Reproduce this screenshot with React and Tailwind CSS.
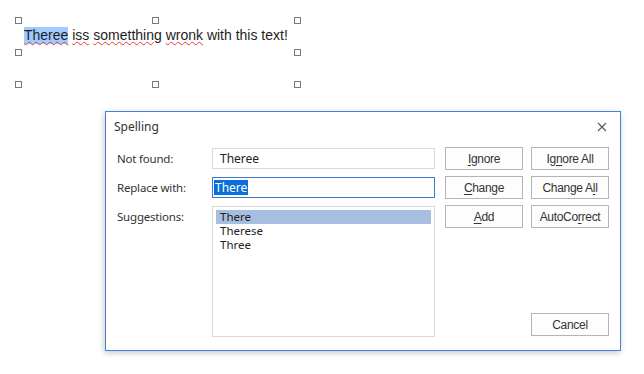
import React from 'react';

const ui = { fontFamily: '"Noto Sans", "Liberation Sans", sans-serif' };
const btnFont = { fontFamily: '"Liberation Sans", Arial, sans-serif' };

/* ── selection handle ── */
function Handle({ className }) {
  return <div className={`absolute w-[7px] h-[7px] border border-[#7a7a7a] bg-white ${className}`} />;
}

function Squiggle({ children }) {
  return (
    <span className="underline decoration-wavy decoration-[#e23b3b] decoration-1 underline-offset-[1px]">
      {children}
    </span>
  );
}

function Btn({ children, className = '' }) {
  return (
    <button
      className={`h-[23px] w-[78px] border border-[#b5b5b5] bg-[#fdfdfd] text-[12px] text-[#333] tracking-[-0.3px] ${className}`}
      style={btnFont}
    >
      {children}
    </button>
  );
}

const U = ({ children }) => <span className="underline underline-offset-2">{children}</span>;

export default function App() {
  return (
    <div className="w-[644px] h-[374px] bg-white overflow-hidden relative">
      {/* Document text box with selection handles */}
      <div className="relative ml-[18px] mt-[20px] w-[279px] h-[64px]">
        <Handle className="-left-[3px] -top-[3px]" />
        <Handle className="left-[134px] -top-[3px]" />
        <Handle className="right-[-4px] -top-[3px]" />
        <Handle className="-left-[3px] top-[29px]" />
        <Handle className="right-[-4px] top-[29px]" />
        <Handle className="-left-[3px] bottom-[-4px]" />
        <Handle className="left-[134px] bottom-[-4px]" />
        <Handle className="right-[-4px] bottom-[-4px]" />
        <p
          className="absolute left-[6px] top-[6px] text-[14px] leading-[18px] text-[#1e1e1e] whitespace-nowrap"
          style={{ fontFamily: '"Liberation Sans", Arial, sans-serif' }}
        >
          <span className="bg-[#9fcbff] pb-[1px]">
            <Squiggle>Theree</Squiggle>
          </span>{' '}
          <Squiggle>iss</Squiggle> <Squiggle>sometthing</Squiggle> <Squiggle>wronk</Squiggle> with this text!
        </p>
      </div>

      {/* Spelling dialog */}
      <div
        className="absolute left-[105px] top-[111px] w-[516px] h-[240px] bg-white border border-[#3f84dc] shadow-[-1px_2px_6px_rgba(0,0,0,0.22)]"
        style={ui}
      >
        <div className="h-[27px] flex items-center justify-between pl-[8px] pr-[13px] mt-[1px]">
          <span className="text-[12px] text-[#333]">Spelling</span>
          <svg width="10" height="10" viewBox="0 0 10 10" className="text-[#555]">
            <path d="M1 1L9 9M9 1L1 9" stroke="currentColor" strokeWidth="1.1" />
          </svg>
        </div>

        <div className="flex pl-[11px] pr-[11px] mt-[7px]">
          {/* left: labels + fields */}
          <div className="flex flex-col gap-[8px] mt-[1px]">
            <div className="flex items-center">
              <span className="w-[95px] text-[11.5px] text-[#333] tracking-[-0.2px]">Not found:</span>
              <div className="w-[223px] h-[21px] border border-[#d9d9d9] flex items-center px-[7px] text-[12px] text-[#222]">
                Theree
              </div>
            </div>
            <div className="flex items-center">
              <span className="w-[95px] text-[11.5px] text-[#333] tracking-[-0.2px]">Replace with:</span>
              <div className="w-[223px] h-[21px] border border-[#3a78d4] flex items-center px-[1px] text-[12px]">
                <span className="bg-[#0a6fd8] text-white px-[1px] leading-[15px]">There</span>
              </div>
            </div>
            <div className="flex items-start">
              <span className="w-[95px] text-[11.5px] text-[#333] tracking-[-0.2px] mt-[2px]">Suggestions:</span>
              <div className="w-[223px] h-[131px] border border-[#d9d9d9] p-[3px] text-[11.5px] text-[#222]">
                <div className="bg-[#a8bee0] pl-[4px] h-[14px] leading-[14px]">There</div>
                <div className="pl-[4px] h-[14px] leading-[14px]">Therese</div>
                <div className="pl-[4px] h-[14px] leading-[14px]">Three</div>
              </div>
            </div>
          </div>

          {/* right: buttons */}
          <div className="ml-[10px] flex flex-col justify-between">
            <div className="grid grid-cols-[78px_78px] gap-x-[8px] gap-y-[6px]">
              <Btn>
                <U>I</U>gnore
              </Btn>
              <Btn>
                Ig<U>n</U>ore All
              </Btn>
              <Btn>
                <U>C</U>hange
              </Btn>
              <Btn>
                Change A<U>l</U>l
              </Btn>
              <Btn>
                <U>A</U>dd
              </Btn>
              <Btn>
                AutoCo<U>r</U>rect
              </Btn>
            </div>
            <div className="flex justify-end mb-[1px]">
              <Btn>Cancel</Btn>
            </div>
          </div>
        </div>
      </div>
    </div>
  );
}
